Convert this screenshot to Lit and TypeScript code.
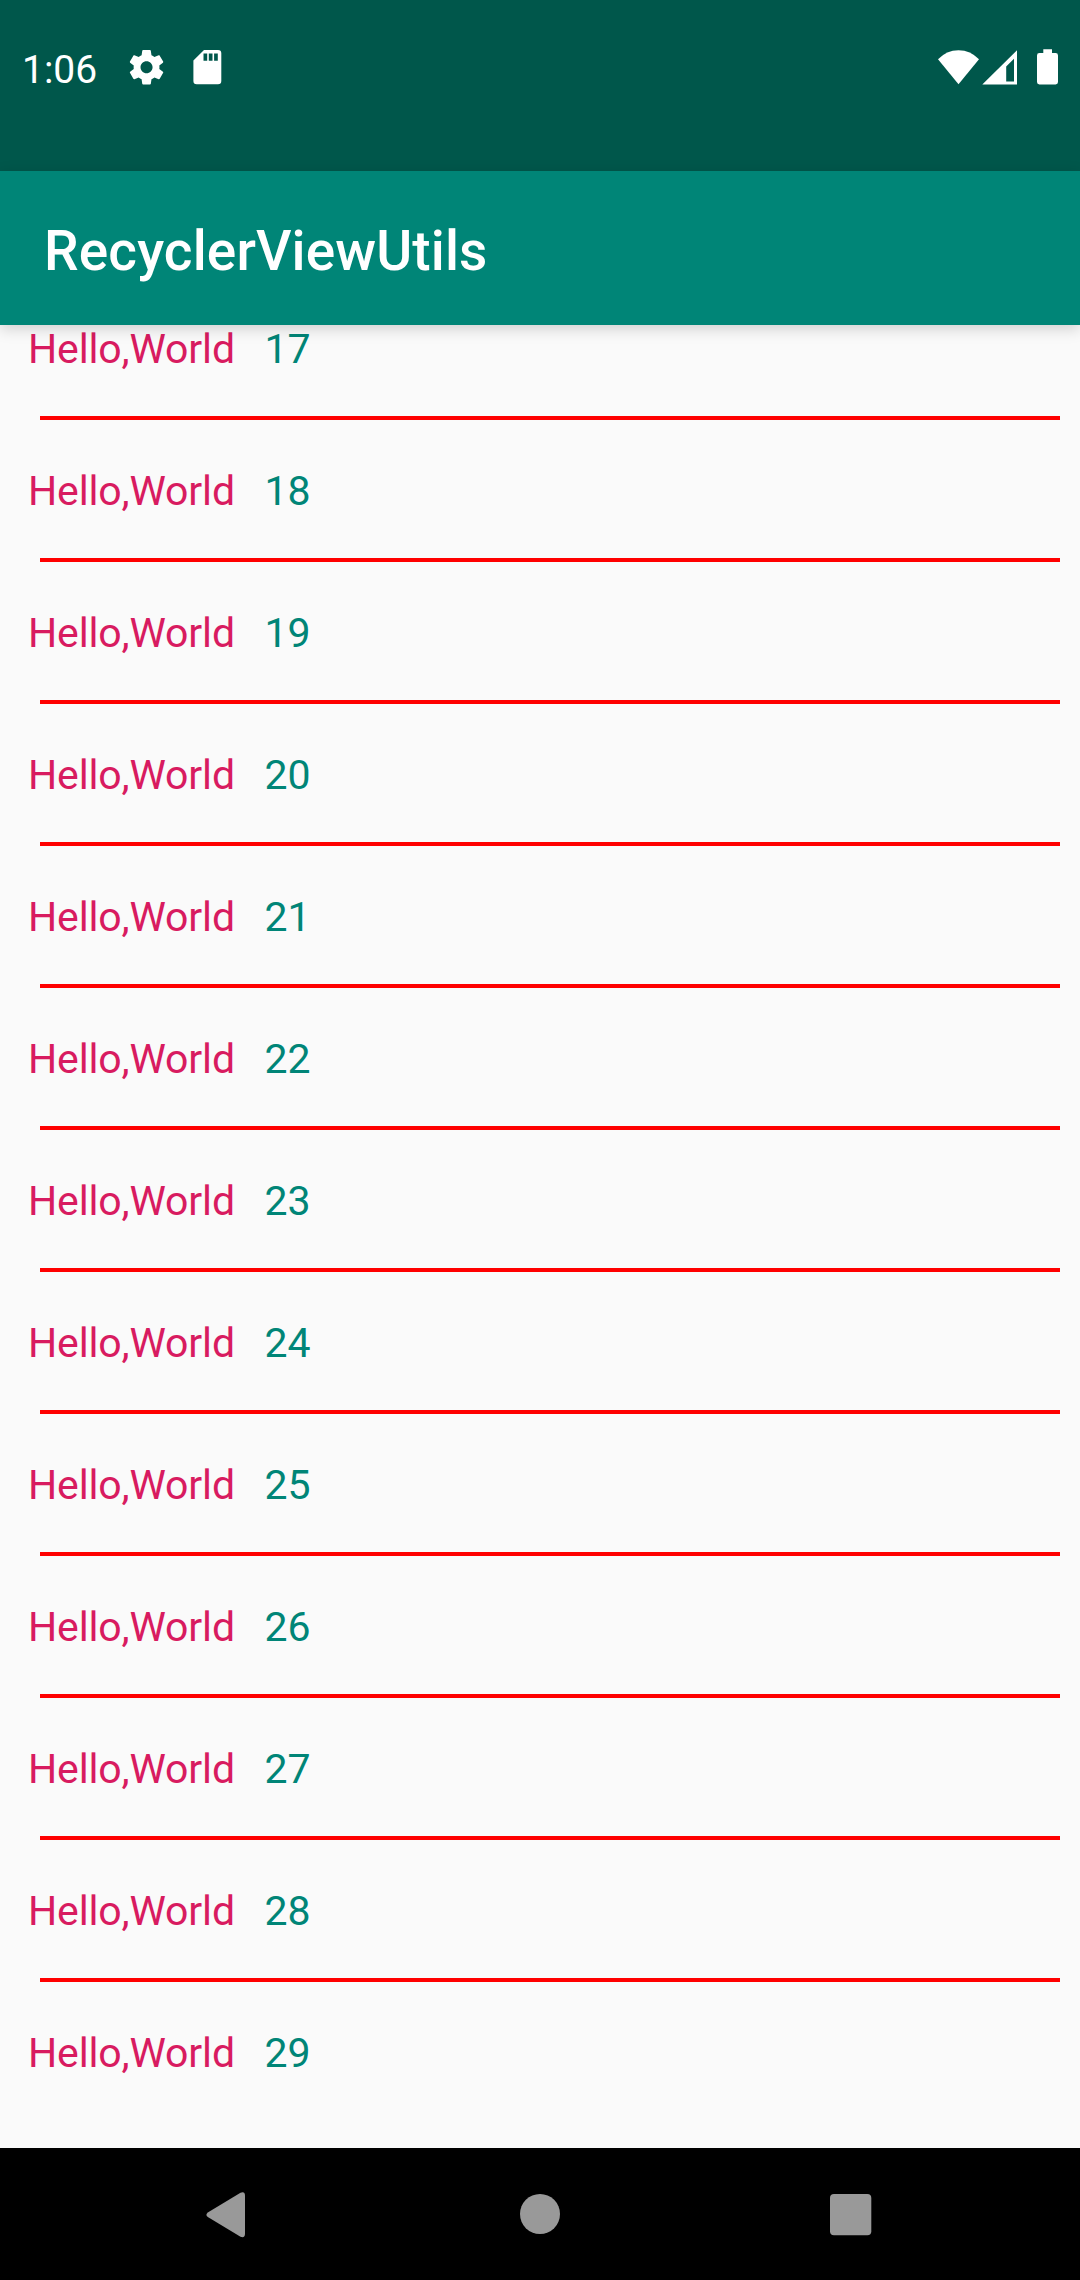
import { LitElement, html, css } from "lit";
import { customElement, state } from "lit/decorators.js";

@customElement("app-root")
export class AppRoot extends LitElement {
  @state() private items = Array.from({ length: 13 }, (_, i) => i + 17);

  static styles = css`
    :host {
      display: flex;
      flex-direction: column;
      width: 1080px;
      height: 2280px;
      overflow: hidden;
      background: #fafafa;
      font-family: Roboto, "Noto Sans", sans-serif;
    }
    svg {
      display: block;
      flex: none;
    }
    .status {
      flex: none;
      height: 171px;
      box-sizing: border-box;
      padding: 48px 20px 0 22px;
      display: flex;
      align-items: flex-start;
      justify-content: space-between;
      background: #00574b;
      color: #fff;
    }
    .left,
    .right {
      display: flex;
      height: 40px;
    }
    .clock {
      width: 107px;
      font-size: 39px;
      line-height: 44px;
    }
    .bar {
      flex: none;
      height: 154px;
      box-sizing: border-box;
      padding: 6px 44px 0;
      display: flex;
      align-items: center;
      background: #008577;
      color: #fff;
      font-size: 55px;
      font-weight: 500;
      letter-spacing: 0.12px;
      z-index: 1;
      box-shadow: 0 4px 14px rgba(0, 0, 0, 0.17);
    }
    .list {
      flex: 1;
      min-height: 0;
      overflow: hidden;
    }
    .rows {
      margin-top: -47px;
    }
    .row {
      height: 138px;
      box-sizing: border-box;
      padding: 3px 0 0 28px;
      display: flex;
      align-items: center;
      gap: 27.5px;
      font-size: 41px;
      letter-spacing: -0.15px;
      color: #d81b60;
      white-space: nowrap;
    }
    .label {
      width: 209px;
    }
    .num {
      color: #008577;
    }
    .line {
      height: 4px;
      margin: 0 20px 0 40px;
      background: #f00;
    }
    .nav {
      flex: none;
      height: 132px;
      background: #000;
    }
  `;

  render() {
    return html`
      <div class="status">
        <div class="left">
          <span class="clock">1:06</span>
          <svg width="160" height="40" viewBox="129 48 160 40" fill="#fff">
            <g transform="translate(125.9 46.6) scale(1.72)">
              <path d="M19.43 12.98c.04-.32.07-.64.07-.98s-.03-.66-.07-.98l2.11-1.65c.19-.15.24-.42.12-.64l-2-3.46c-.12-.22-.39-.3-.61-.22l-2.49 1c-.52-.4-1.08-.73-1.69-.98l-.38-2.65C14.46 2.18 14.25 2 14 2h-4c-.25 0-.46.18-.49.42l-.38 2.65c-.61.25-1.17.59-1.69.98l-2.49-1c-.23-.09-.49 0-.61.22l-2 3.46c-.13.22-.07.49.12.64l2.11 1.65c-.04.32-.07.65-.07.98s.03.66.07.98l-2.11 1.65c-.19.15-.24.42-.12.64l2 3.46c.12.22.39.3.61.22l2.49-1c.52.4 1.08.73 1.69.98l.38 2.65c.03.24.24.42.49.42h4c.25 0 .46-.18.49-.42l.38-2.65c.61-.25 1.17-.59 1.69-.98l2.49 1c.23.09.49 0 .61-.22l2-3.46c.12-.22.07-.49-.12-.64l-2.11-1.65zM12 15.5c-1.93 0-3.5-1.57-3.5-3.500s1.570-3.500 3.500-3.500 3.500 1.570 3.500 3.500-1.570 3.500-3.500 3.500z"/>
            </g>
            <path fill-rule="evenodd" d="M204 50h14q3.300 0 3.300 3.300V81q0 3.300-3.300 3.300H196.700q-3.300 0-3.300-3.300V60.500zM203.500 53.500v7.300h3.700v-7.300zM208.800 53.500v7.300h3.700v-7.300zM214.100 53.500v7.300h3.700v-7.300z"/>
          </svg>
        </div>
        <div class="right">
          <svg width="124" height="40" viewBox="936 48 124 40" fill="#fff">
            <path d="M938 59.300Q946.500 50.200 958.500 50.200T979 59.300L958.500 84.300z"/>
            <path fill-rule="evenodd" d="M1017 50.300V84.500H982.300zM1014 58.800L1006.200 66.500V81.500H1014z"/>
            <path d="M1043.300 49.300h8.700v3.700h3.600q2.400 0 2.400 2.400V82q0 2.400-2.400 2.400h-16.200q-2.400 0-2.400-2.400V55.400q0-2.400 2.400-2.400h3.900z"/>
          </svg>
        </div>
      </div>
      <div class="bar">RecyclerViewUtils</div>
      <div class="list">
        <div class="rows">
          ${this.items.map(
            (n, i) => html`
              <div class="row"><span class="label">Hello,World</span><span class="num">${n}</span></div>
              ${i < this.items.length - 1 ? html`<div class="line"></div>` : ""}
            `,
          )}
        </div>
      </div>
      <div class="nav">
        <svg width="1080" height="132" viewBox="0 2148 1080 132" fill="#999">
          <path d="M207.800 2212.500L240.500 2192.800Q245 2191 245 2195.800V2233.500Q245 2238.500 240.500 2236.800L207.800 2217.100Q205 2214.800 207.800 2212.500z"/>
          <circle cx="540" cy="2214" r="20"/>
          <rect x="830" y="2194" width="41.300" height="41.300" rx="4"/>
        </svg>
      </div>
    `;
  }
}
